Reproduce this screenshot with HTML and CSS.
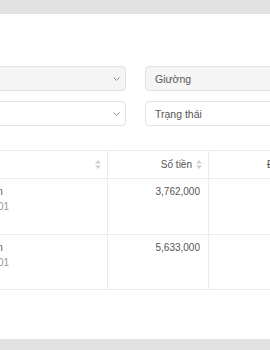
FILE: index.html
```html
<!DOCTYPE html>
<html lang="vi">
<head>
<meta charset="utf-8">
<link rel="stylesheet" href="styles.css">
</head>
<body>
<div class="panel">
  <div class="filters">
    <div class="select filled"><span class="ph">Phòng</span><svg class="chev" width="7" height="4" viewBox="0 0 7 4"><path d="M0.5 0.5 L3.5 3.3 L6.5 0.5" fill="none" stroke="#8a8a8a" stroke-width="1"/></svg></div>
    <div class="select filled"><span class="ph">Giường</span></div>
    <div class="select"><span class="ph">Tháng</span><svg class="chev" width="7" height="4" viewBox="0 0 7 4"><path d="M0.5 0.5 L3.5 3.3 L6.5 0.5" fill="none" stroke="#8a8a8a" stroke-width="1"/></svg></div>
    <div class="select"><span class="ph">Trạng thái</span></div>
  </div>
  <div class="table">
    <div class="row head">
      <div class="cell c1"><span>Khách hàng</span><svg class="sort" width="6" height="9" viewBox="0 0 6 9"><path d="M3 0 L6 3.5 L0 3.5 Z M0 5.5 L6 5.5 L3 9 Z" fill="#cfcfcf"/></svg></div>
      <div class="cell c2"><span>Số tiền</span><svg class="sort" width="6" height="9" viewBox="0 0 6 9"><path d="M3 0 L6 3.5 L0 3.5 Z M0 5.5 L6 5.5 L3 9 Z" fill="#cfcfcf"/></svg></div>
      <div class="cell c3"><span>Đã thanh toán</span></div>
    </div>
    <div class="row body">
      <div class="cell c1"><div class="main">Nguyễn Thu Lan</div><div class="sub">SĐT: 0987654301</div></div>
      <div class="cell c2 num">3,762,000</div>
      <div class="cell c3"></div>
    </div>
    <div class="row body last">
      <div class="cell c1"><div class="main">Nguyễn Thu Lan</div><div class="sub">SĐT: 0912345601</div></div>
      <div class="cell c2 num">5,633,000</div>
      <div class="cell c3"></div>
    </div>
  </div>
</div>
</body>
</html>
```
FILE: styles.css
```css
html, body {
  margin: 0;
  padding: 0;
}
body {
  width: 270px;
  height: 350px;
  overflow: hidden;
  background: #e2e2e2;
  font-family: "Liberation Sans", Arial, sans-serif;
  font-size: 10px;
  color: #555;
}
.panel {
  box-sizing: border-box;
  width: 600px;
  height: 325px;
  margin: 14px 0 0 -95px;
  padding: 52px 16px 0;
  background: #fff;
}
.filters {
  display: grid;
  grid-template-columns: 205px 1fr;
  column-gap: 19px;
  row-gap: 10px;
}
.select {
  box-sizing: border-box;
  height: 25px;
  border: 1px solid #e1e1e1;
  border-radius: 4px;
  background: #fff;
  display: flex;
  align-items: center;
  justify-content: space-between;
  padding: 0 5px 0 9px;
}
.select.filled {
  background: #f5f5f5;
}
.ph {
  color: #555;
  font-size: 10.5px;
}
.table {
  margin-top: 24px;
}
.row {
  display: grid;
  grid-template-columns: 187px 101px 1fr;
  border-bottom: 1px solid #ececec;
}
.row.head {
  border-top: 1px solid #ececec;
  height: 29px;
  box-sizing: border-box;
}
.row.body {
  height: 56px;
  box-sizing: border-box;
}
.row.last {
  height: 55px;
}
.cell {
  box-sizing: border-box;
  border-right: 1px solid #ececec;
}
.head .cell {
  display: flex;
  align-items: center;
  padding: 0 6px 0 8px;
  color: #555;
}
.head .c1 {
  justify-content: space-between;
}
.head .c2 {
  justify-content: flex-end;
  gap: 4px;
}
.head .c3 {
  padding-left: 58px;
  border-right: none;
}
.body .cell {
  padding: 5px 8px 0;
  line-height: 15px;
}
.body .c3 {
  border-right: none;
}
.num {
  text-align: right;
}
.sub {
  color: #9a9a9a;
}
```
